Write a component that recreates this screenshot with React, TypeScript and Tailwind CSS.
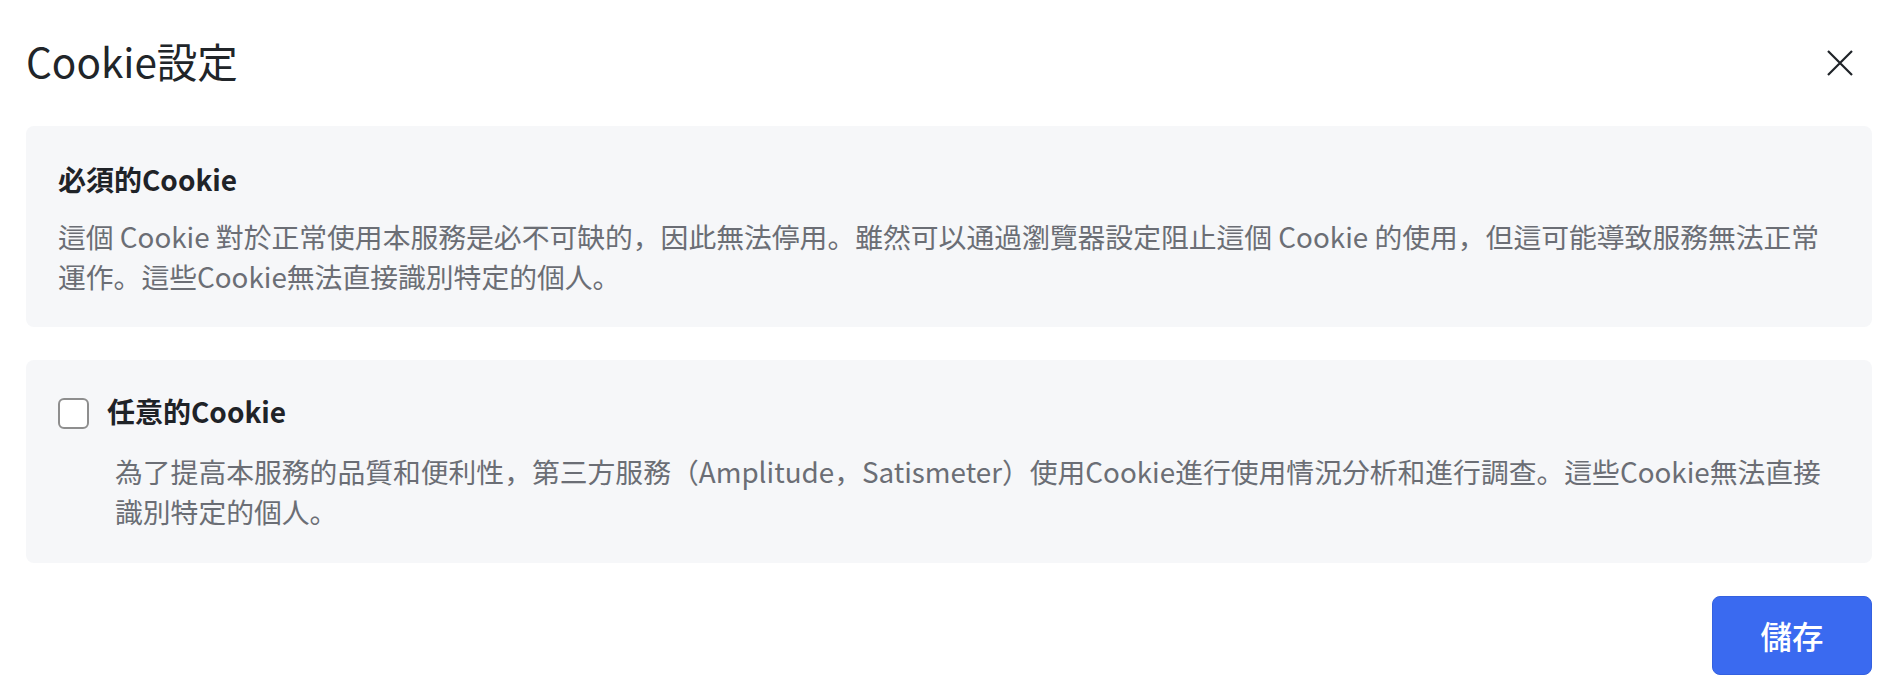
const font = "font-['Noto_Sans_CJK_JP','Noto_Sans_CJK_TC','Noto_Sans',sans-serif]";

function CloseIcon() {
  return (
    <svg width="26" height="26" viewBox="0 0 26 26" fill="none" stroke="#1f2328" strokeWidth="2.2" strokeLinecap="butt">
      <path d="M1 1L25 25M25 1L1 25" />
    </svg>
  );
}

export default function App() {
  return (
    <div className={`${font} w-[1894px] h-[700px] bg-white pl-[26px] pr-[22px] pt-[37px]`}>
      {/* header */}
      <div className="flex items-center justify-between">
        <h1 className="text-[40.5px] leading-[48px] font-normal text-[#212529]">Cookie設定</h1>
        <button className="mr-[19px] mt-[4px] p-0 flex items-center justify-center">
          <CloseIcon />
        </button>
      </div>

      {/* required */}
      <section className="mt-[41px] rounded-lg bg-[#f6f7f9] pl-[32px] pr-[30px] pt-[33px] pb-[31px]">
        <h2 className="text-[28px] leading-[40px] font-bold text-[#1f2328]">必須的Cookie</h2>
        <p className="mt-[17px] text-[27.8px] leading-[40px] font-normal text-[#6b6e75]">
          這個 Cookie 對於正常使用本服務是必不可缺的，因此無法停用。雖然可以通過瀏覽器設定阻止這個 Cookie 的使用，但這可能導致服務無法正常運作。這些Cookie無法直接識別特定的個人。
        </p>
      </section>

      {/* optional */}
      <section className="mt-[33px] rounded-lg bg-[#f6f7f9] pl-[32px] pr-[30px] pt-[31px] pb-[32px]">
        <label className="flex items-center gap-[18px]">
          <span className="w-[31px] h-[31px] mt-[5px] rounded-[6px] border-2 border-[#8e8e8e] bg-white" />
          <span className="text-[28px] leading-[40px] font-bold text-[#1f2328]">任意的Cookie</span>
        </label>
        <p className="ml-[57px] mt-[20px] text-[27.8px] leading-[40px] font-normal text-[#6b6e75]">
          為了提高本服務的品質和便利性，第三方服務（Amplitude，Satismeter）使用Cookie進行使用情況分析和進行調查。這些Cookie無法直接識別特定的個人。
        </p>
      </section>

      {/* footer */}
      <div className="mt-[33px] flex justify-end">
        <button className="w-[160px] h-[79px] rounded-lg border border-[#3461e0] bg-[#3a6af0] text-[31.5px] font-medium text-white">
          儲存
        </button>
      </div>
    </div>
  );
}
